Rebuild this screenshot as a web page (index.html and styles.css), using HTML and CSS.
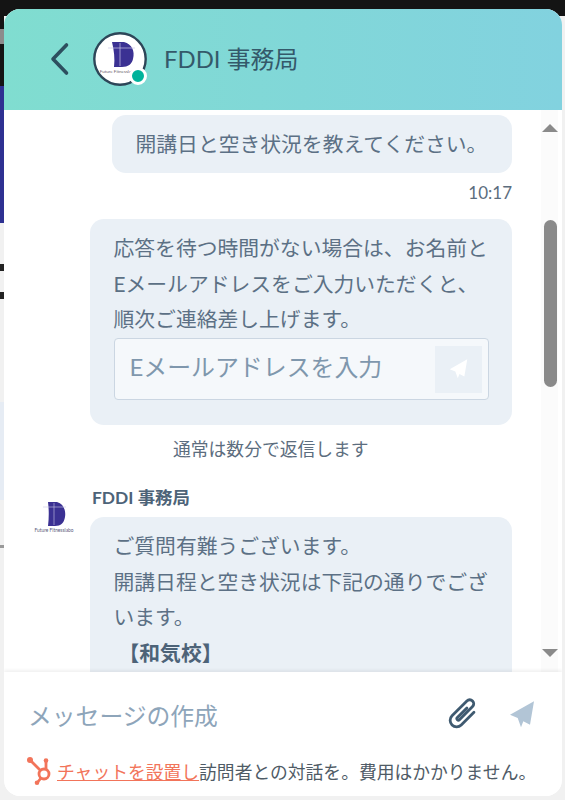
FILE: index.html
```html
<!DOCTYPE html>
<html lang="ja">
<head>
<meta charset="utf-8">
<title>FDDI 事務局</title>
<link rel="stylesheet" href="styles.css">
</head>
<body>
<div class="backdrop">
  <div class="bd-top"></div>
  <div class="bd-side bd-dark"></div>
  <div class="bd-side bd-glint"></div>
  <div class="bd-side bd-navy"></div>
  <div class="bd-side bd-dash bd-dash-1"></div>
  <div class="bd-side bd-dash bd-dash-2"></div>
  <div class="bd-side bd-pale"></div>
  <div class="bd-side bd-tick"></div>
</div>
<main class="widget">
  <header class="head">
    <svg class="back" viewBox="0 0 24 36"><path d="M19.500 4 6 18l13.500 14" fill="none" stroke="#2d4f5f" stroke-width="3.600" stroke-linecap="round" stroke-linejoin="round"/></svg>
    <div class="avatar-wrap">
      <svg class="avatar" viewBox="0 0 54 54">
        <circle cx="27" cy="27" r="25.700" fill="#fff" stroke="#2d4658" stroke-width="2.400"/>
        <path d="M19 10h12c8 2 11 9 9 17-1 5-5 8-11 8H21c1-8 0-17-2-25Z" fill="#3b3193"/>
        <path d="M27 11v23M15 16h27" stroke="#c9c6e6" stroke-width=".7" fill="none"/>
        <text x="25" y="41" class="logo-text" text-anchor="middle">Future Fitnesslabo</text>
      </svg>
      <span class="status"></span>
    </div>
    <h1 class="title">FDDI 事務局</h1>
  </header>
  <div class="body">
    <div class="thread">
      <div class="bubble bubble-first">開講日と空き状況を教えてください。</div>
      <div class="time">10:17</div>
      <div class="bubble bubble-form">
        <p class="form-text">応答を待つ時間がない場合は、お名前とEメールアドレスをご入力いただくと、順次ご連絡差し上げます。</p>
        <div class="email">
          <span class="email-ph">Eメールアドレスを入力</span>
          <span class="email-btn">
            <svg class="plane" viewBox="0 0 26 27"><path d="M25 .3 1 13.700 8.700 17 12 26.300 14.300 20.300 21 23.700Z" fill="#fff"/></svg>
          </span>
        </div>
      </div>
      <div class="note">通常は数分で返信します</div>
      <div class="agent">
        <svg class="agent-logo" viewBox="0 0 40 36">
          <path d="M14 2h9c7 2 9 9 8 15-1 6-4 9-10 9h-7c1-8 1-16 0-24Z" fill="#3b3193"/>
          <path d="M20 3v22M9 7h23" stroke="#c9c6e6" stroke-width=".6" fill="none"/>
          <text x="20" y="32" class="logo-text-small" text-anchor="middle">Future Fitnesslabo</text>
        </svg>
        <div class="agent-main">
          <div class="agent-name">FDDI 事務局</div>
          <div class="bubble bubble-agent">
            <p>ご質問有難うございます。</p>
            <p>開講日程と空き状況は下記の通りでございます。</p>
            <p class="branch">【和気校】</p>
            <p>&nbsp;</p>
          </div>
        </div>
      </div>
    </div>
    <div class="scroll">
      <span class="arrow arrow-up"></span>
      <span class="thumb"></span>
      <span class="arrow arrow-down"></span>
    </div>
  </div>
  <footer class="foot">
    <div class="compose">
      <span class="compose-ph">メッセージの作成</span>
      <svg class="clip" viewBox="0 0 30 30"><path transform="rotate(45 15 15)" d="M21.500 6V24a6.500 6.500 0 0 1-13 0V3a4 4 0 0 1 8 0V21.500a1.500 1.500 0 0 1-3 0V8" fill="none" stroke="#3f5a70" stroke-width="2.800" stroke-linecap="round"/></svg>
      <svg class="send" viewBox="0 0 26 27"><path d="M25 .3 1 13.700 8.700 17 12 26.300 14.300 20.300 21 23.700Z" fill="#b2c5d6"/></svg>
    </div>
    <div class="brand">
      <svg class="sprocket" viewBox="0 0 26 28"><g fill="none" stroke="#f2745a" stroke-width="2.800"><circle cx="17" cy="17" r="5"/><path d="M3 3l11 11M19 4v8M10 26l4-5"/></g><g fill="#f2745a"><circle cx="3" cy="3" r="3"/><circle cx="19" cy="3.500" r="2.300"/><circle cx="10" cy="25.700" r="2.300"/></g></svg>
      <a class="brand-link">チャットを設置し</a><span>訪問者との対話を。費用はかかりません。</span>
    </div>
  </footer>
</main>
</body>
</html>
```
FILE: styles.css
```css
* { box-sizing: border-box; }
html, body { margin: 0; height: 800px; overflow: hidden; }
body {
  position: relative;
  width: 565px;
  background: #f1f1f1;
  font-family: Lato, "Noto Sans CJK JP", sans-serif;
  color: #4a5f74;
}
p { margin: 0; }

.bd-top { position: absolute; left: 0; top: 0; width: 565px; height: 16px; background: #141414; }
.bd-side { position: absolute; left: 0; width: 4px; }
.bd-dark { top: 9px; height: 77px; background: #141414; }
.bd-glint { top: 29px; height: 15px; background: #8c8c8c; }
.bd-navy { top: 86px; height: 137px; background: #2e3192; }
.bd-dash { height: 7px; background: #222; }
.bd-dash-1 { top: 264px; }
.bd-dash-2 { top: 292px; }
.bd-pale { top: 402px; height: 98px; background: #e6ecf4; }
.bd-tick { top: 545px; height: 3px; background: #999; }

.widget {
  position: absolute;
  left: 4px;
  top: 9px;
  width: 558px;
  height: 787px;
  display: flex;
  flex-direction: column;
  background: #fff;
  border-radius: 16px;
  overflow: hidden;
}

.head {
  flex: none;
  height: 101px;
  display: flex;
  align-items: center;
  padding: 0 0 1px 43px;
  background: linear-gradient(90deg, #80ddd0 0%, #82d2df 100%);
}
.back { width: 24px; height: 36px; }
.avatar-wrap { position: relative; width: 54px; height: 54px; margin-left: 22px; }
.avatar { display: block; width: 54px; height: 54px; }
.logo-text { font-size: 4.500px; fill: #6a5a6a; font-family: Lato, sans-serif; }
.logo-text-small { font-size: 4.800px; fill: #5a5a7a; font-family: Lato, sans-serif; }
.status {
  position: absolute;
  right: 0;
  bottom: 1px;
  width: 18px;
  height: 18px;
  border-radius: 50%;
  background: #00b39b;
  border: 3px solid #fff;
}
.title { margin: -3px 0 0 17px; font-size: 23.900px; font-weight: 400; color: #34596a; }

.body { flex: 1; min-height: 0; display: flex; }
.thread { flex: none; width: 508px; padding-top: 5px; overflow: hidden; }
.bubble {
  background: #eaf0f6;
  border-radius: 14px;
  font-size: 20.800px;
  line-height: 35.500px;
  color: #5c7085;
}
.bubble-first { margin-left: 108px; width: 400px; height: 58px; padding: 11px 0 0 23.500px; white-space: nowrap; }
.time { margin-top: 9px; text-align: right; font-size: 17px; line-height: 22px; color: #5c6d7e; }
.bubble-form { margin: 15px 0 0 86px; width: 422px; height: 206px; padding: 11px 22px 0 23.500px; }
.form-text { height: 106.500px; }
.email {
  margin: 1.500px 1.500px 0 0;
  height: 62px;
  display: flex;
  align-items: center;
  justify-content: space-between;
  padding: 0 6px 0 15px;
  background: #f5f8fb;
  border: 1px solid #cbd6e2;
  border-radius: 4px;
}
.email-ph { margin-top: -4px; font-size: 23.900px; color: #7f97ad; white-space: nowrap; }
.email-btn {
  width: 47px;
  height: 47px;
  display: flex;
  align-items: center;
  justify-content: center;
  background: #eaf0f6;
}
.plane { width: 19px; height: 20px; }
.note { margin: 11px 0 0 169px; font-size: 17.800px; line-height: 26px; color: #5c6d7e; white-space: nowrap; }
.agent { margin-top: 25px; display: flex; }
.agent-logo { flex: none; margin: 13px 0 0 30px; width: 40px; height: 36px; }
.agent-main { margin-left: 16px; width: 422px; }
.agent-name { padding-left: 2px; font-size: 17.400px; line-height: 22px; font-weight: 700; color: #4d6378; }
.bubble-agent { margin-top: 8px; padding: 11px 22px 20px 23.500px; }
.branch { font-weight: 700; text-indent: 5px; color: #4d6378; }

.scroll { flex: 1; position: relative; background: #fff; }
.scroll::before { content: ""; position: absolute; top: 0; bottom: 0; left: 29px; width: 17px; background: #fbfbfb; }
.arrow { position: absolute; left: 30px; width: 0; height: 0; border-left: 8px solid transparent; border-right: 8px solid transparent; }
.arrow-up { top: 14px; border-bottom: 8px solid #8a8a8a; }
.arrow-down { top: 539px; border-top: 8px solid #8a8a8a; }
.thumb { position: absolute; top: 110px; left: 32px; width: 13px; height: 167px; border-radius: 7px; background: #8a8a8a; }

.foot { flex: none; height: 124px; background: #fff; box-shadow: 0 -2px 3px rgba(0, 0, 0, .06); position: relative; }
.compose { height: 84px; display: flex; align-items: center; padding: 0 27px 0 24px; }
.compose-ph { flex: 1; font-size: 23.800px; color: #8ea5ba; white-space: nowrap; }
.clip { width: 30px; height: 30px; overflow: visible; }
.send { margin-left: 31px; width: 26px; height: 27px; }
.brand { display: flex; align-items: center; height: 30px; padding-left: 23px; font-size: 17.800px; color: #4f5b66; white-space: nowrap; }
.sprocket { width: 26px; height: 28px; margin-right: 4px; }
.brand-link { color: #f2745a; text-decoration: underline; }
```
